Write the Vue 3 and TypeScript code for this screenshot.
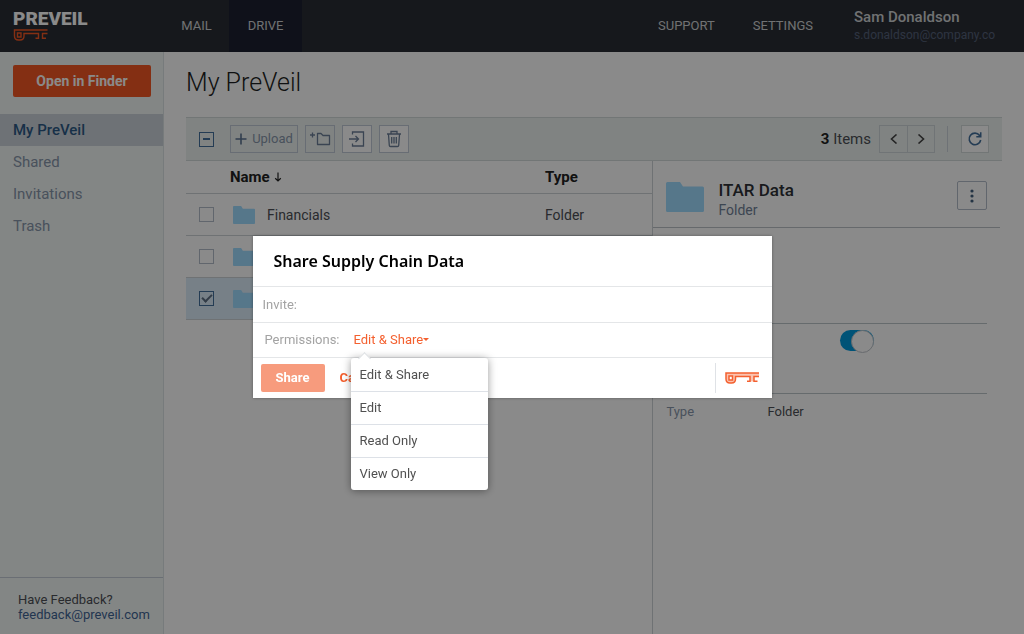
<script setup lang="ts">
import { ref } from 'vue'

interface Row {
  id: number
  name: string
  type: string
  checked: boolean
}

const places: string[] = ['My PreVeil', 'Shared', 'Invitations', 'Trash']
const activePlace = ref('My PreVeil')

const rows = ref<Row[]>([
  { id: 1, name: 'Financials', type: 'Folder', checked: false },
  { id: 2, name: '', type: '', checked: false },
  { id: 3, name: '', type: '', checked: true },
])

const permissions: string[] = ['Edit & Share', 'Edit', 'Read Only', 'View Only']
const permission = ref('Edit & Share')
const menuOpen = ref(true)
const invite = ref('')
const synced = ref(true)

function choose(value: string): void {
  permission.value = value
  menuOpen.value = false
}
</script>

<template>
  <div class="app">
    <header class="topbar">
      <div class="brand">
        <span class="wordmark">PREVEIL</span>
        <svg class="brand-key" viewBox="0 0 34 12" aria-hidden="true">
          <path d="M34 1H1V7Q1 11 5 11H6.500Q10.500 11 10.500 7V4.500H25V9.300H22M34 4.500H29V9.300H32.500M4 4H7.500V8H4Z" fill="none" stroke="currentColor" stroke-width="1.400" />
        </svg>
      </div>
      <nav class="tabs">
        <a href="#" class="tab mail">MAIL</a>
        <a href="#" class="tab active">DRIVE</a>
      </nav>
      <nav class="links">
        <a href="#">SUPPORT</a>
        <a href="#">SETTINGS</a>
      </nav>
      <div class="account">
        <strong>Sam Donaldson</strong>
        <span>s.donaldson@company.co</span>
      </div>
    </header>

    <div class="body">
      <aside class="sidebar">
        <button type="button" class="finder">Open in Finder</button>
        <nav class="places">
          <a v-for="p in places" :key="p" href="#" :class="{ active: p === activePlace }" @click.prevent="activePlace = p">{{ p }}</a>
        </nav>
        <div class="feedback">
          <span>Have Feedback?</span>
          <a href="mailto:feedback@preveil.com">feedback@preveil.com</a>
        </div>
      </aside>

      <main class="main">
        <h1>My PreVeil</h1>
        <div class="toolbar">
          <input type="checkbox" class="check partial" aria-label="Select all" />
          <div class="actions">
            <button type="button" class="tool upload">
              <svg width="12" height="12" viewBox="0 0 12 12" aria-hidden="true"><path d="M6 0.500V11.500M0.500 6H11.500" stroke="currentColor" stroke-width="1.600" /></svg>
              Upload
            </button>
            <button type="button" class="tool" aria-label="New folder">
              <svg width="22" height="16" viewBox="0 0 22 16" fill="none" stroke="currentColor" aria-hidden="true">
                <path d="M3.500 1.500V6.500M1 4H6" stroke-width="1.300" />
                <path d="M8.500 2.500H12L14 4.500H20.500V13.500H8.500Z" stroke-width="1.300" stroke-linejoin="round" />
              </svg>
            </button>
            <button type="button" class="tool light" aria-label="Move to">
              <svg width="18" height="18" viewBox="0 0 18 18" fill="none" stroke="currentColor" stroke-width="1.300" aria-hidden="true">
                <path d="M4.500 4.500V2H15.500V16H4.500V13.500M1 9H10.500M7.500 6L10.500 9L7.500 12" />
              </svg>
            </button>
            <button type="button" class="tool light" aria-label="Delete">
              <svg width="16" height="18" viewBox="0 0 16 18" fill="none" stroke="currentColor" stroke-width="1.300" aria-hidden="true">
                <path d="M1 4H15M5 4V1.500H11V4M2.500 4.500L3.300 15.500Q3.400 16.500 4.500 16.500H11.500Q12.600 16.500 12.700 15.500L13.500 4.500M5.700 7V13.500M8 7V13.500M10.300 7V13.500" />
              </svg>
            </button>
          </div>
          <p class="count"><b>3</b> Items</p>
          <div class="pager">
            <button type="button" aria-label="Previous page">
              <svg width="8" height="10" viewBox="0 0 8 10" aria-hidden="true"><path d="M6.500 0.500L1.500 5L6.500 9.500" /></svg>
            </button>
            <button type="button" aria-label="Next page">
              <svg width="8" height="10" viewBox="0 0 8 10" aria-hidden="true"><path d="M1.500 0.500L6.500 5L1.500 9.500" /></svg>
            </button>
          </div>
          <button type="button" class="refresh" aria-label="Refresh">
            <svg width="16" height="16" viewBox="0 0 16 16" fill="none" stroke="currentColor" stroke-width="1.600" aria-hidden="true">
              <path d="M13.700 9A5.800 5.800 0 1 1 12.600 4.400L13.700 5.500M13.700 1.200V5.800H9.300" />
            </svg>
          </button>
        </div>

        <div class="panes">
          <div class="list">
            <table>
              <thead>
                <tr>
                  <th class="pick"></th>
                  <th class="name">Name
                    <svg width="8" height="10" viewBox="0 0 8 10" fill="none" stroke="currentColor" stroke-width="1.200" aria-hidden="true"><path d="M4 0.500V9M1.200 6.300L4 9L6.800 6.300" /></svg>
                  </th>
                  <th>Type</th>
                </tr>
              </thead>
              <tbody>
                <tr v-for="row in rows" :key="row.id" :class="{ selected: row.checked }">
                  <td class="pick"><input v-model="row.checked" type="checkbox" class="check" aria-label="Select row" /></td>
                  <td>
                    <span class="entry">
                      <svg width="22" height="18" viewBox="0 0 38 30" preserveAspectRatio="none" aria-hidden="true"><path d="M1.500 0H14L17 4.500H36.500Q38 4.500 38 6V28.500Q38 30 36.500 30H1.500Q0 30 0 28.500V1.500Q0 0 1.500 0Z" fill="currentColor" /></svg>
                      {{ row.name }}
                    </span>
                  </td>
                  <td>{{ row.type }}</td>
                </tr>
              </tbody>
            </table>
          </div>

          <section class="detail">
            <div class="detail-head">
              <svg class="folder" width="38" height="30" viewBox="0 0 38 30" aria-hidden="true"><path d="M1.500 0H14L17 4.500H36.500Q38 4.500 38 6V28.500Q38 30 36.500 30H1.500Q0 30 0 28.500V1.500Q0 0 1.500 0Z" fill="currentColor" /></svg>
              <div class="detail-title">
                <h2>ITAR Data</h2>
                <span>Folder</span>
              </div>
              <button type="button" class="more" aria-label="More actions">
                <svg width="4" height="14" viewBox="0 0 4 14" fill="currentColor" aria-hidden="true"><circle cx="2" cy="2" r="1.600" /><circle cx="2" cy="7" r="1.600" /><circle cx="2" cy="12" r="1.600" /></svg>
              </button>
            </div>
            <div class="detail-body">
              <div class="block spacer"></div>
              <div class="block sync">
                <input v-model="synced" type="checkbox" role="switch" class="switch" aria-label="Sync" />
              </div>
              <dl class="facts">
                <dt>Type</dt>
                <dd>Folder</dd>
              </dl>
            </div>
          </section>
        </div>
      </main>
    </div>

    <div class="overlay">
      <form class="dialog" role="dialog" aria-labelledby="share-title" @submit.prevent>
        <h2 id="share-title">Share Supply Chain Data</h2>
        <div class="line invite">
          <label for="invite">Invite:</label>
          <input id="invite" v-model="invite" type="text" />
        </div>
        <div class="line perms">
          <span id="perm-label" class="perm-label">Permissions:</span>
          <div class="picker">
            <button type="button" class="current" aria-haspopup="menu" aria-describedby="perm-label" @click="menuOpen = !menuOpen">{{ permission }}<i class="caret"></i></button>
            <div v-if="menuOpen" class="menu" role="menu">
              <button v-for="p in permissions" :key="p" type="button" role="menuitem" @click="choose(p)">{{ p }}</button>
            </div>
          </div>
        </div>
        <div class="foot">
          <button type="submit" class="share">Share</button>
          <button type="button" class="cancel">Cancel</button>
          <div class="seal">
            <svg width="34" height="12" viewBox="0 0 34 12" aria-hidden="true">
              <path d="M1 1H34V4.500H10.500V7Q10.500 11 6.500 11H5Q1 11 1 7Z" fill="#fbc3b0" />
              <path d="M25 4H29V9.500H25Z" fill="#fbc3b0" />
              <path d="M34 1H1V7Q1 11 5 11H6.500Q10.500 11 10.500 7V4.500H25V9.300H22M34 4.500H29V9.300H32.500" fill="none" stroke="currentColor" stroke-width="1.500" />
              <path d="M4 4H7.500V8H4Z" fill="#fff" stroke="currentColor" stroke-width="1.500" />
            </svg>
          </div>
        </div>
      </form>
    </div>
  </div>
</template>

<style>
html,
body,
#app {
  height: 100%;
}
</style>

<style scoped>
* {
  box-sizing: border-box;
}
.app {
  min-height: 100%;
  display: flex;
  flex-direction: column;
  background: #fff;
  color: #4c4f55;
  font: 14px/20px Roboto, "Liberation Sans", sans-serif;
}
button {
  font: inherit;
  color: inherit;
  margin: 0;
  padding: 0;
  border: 0;
  background: none;
  cursor: pointer;
}
a {
  color: inherit;
  text-decoration: none;
}
h1,
h2,
p,
dl,
dd {
  margin: 0;
}
.topbar {
  display: flex;
  height: 52px;
  background: #2a2e35;
  color: #d0d2d4;
}
.brand {
  width: 164px;
  padding: 9px 0 0 13px;
  display: flex;
  flex-direction: column;
}
.wordmark {
  font-size: 19px;
  line-height: 20px;
  font-weight: 900;
  color: #fff;
}
.brand-key {
  width: 35px;
  height: 12px;
  color: #f45723;
}
.tabs,
.links {
  display: flex;
  font-size: 13px;
}
.tab {
  width: 73px;
  display: flex;
  align-items: center;
  justify-content: center;
}
.tab.mail {
  width: 65px;
}
.tab.active {
  background: #1c2030;
}
.links {
  margin-left: auto;
  align-items: center;
  gap: 38px;
}
.account {
  width: 170px;
  margin-left: 41px;
  padding-top: 8px;
  display: flex;
  flex-direction: column;
  line-height: 18px;
}
.account strong {
  font-size: 15px;
  font-weight: 500;
}
.account span {
  font-size: 12px;
  color: #55617a;
}
.body {
  flex: 1;
  display: flex;
}
.sidebar {
  width: 164px;
  display: flex;
  flex-direction: column;
  background: #f3f8f6;
  border-right: 1px solid #dde3e6;
}
.finder {
  height: 32px;
  margin: 13px 12px 17px 13px;
  border-radius: 2px;
  background: #f45723;
  color: #fff;
  font-weight: 700;
}
.places {
  display: flex;
  flex-direction: column;
}
.places a {
  padding: 0 13px;
  font-size: 15px;
  line-height: 32px;
  color: #8796aa;
}
.places a.active {
  background: #ccd3da;
  color: #2c5a86;
  font-weight: 500;
}
.feedback {
  margin-top: auto;
  padding: 14px 18px 12px;
  border-top: 1px solid #c4ccd6;
  display: flex;
  flex-direction: column;
  font-size: 13px;
  line-height: 15px;
}
.feedback a {
  color: #3f6494;
}
.main {
  flex: 1;
  display: flex;
  flex-direction: column;
  padding: 0 22px;
}
h1 {
  padding: 15px 0 18px;
  font-size: 25px;
  line-height: 32px;
  font-weight: 300;
  color: #1c1e22;
}
.toolbar {
  height: 44px;
  display: flex;
  align-items: center;
  padding: 0 13px;
  background: #edf3f1;
  border-top: 1px solid #d3dadb;
  border-bottom: 1px solid #d3dadb;
}
.check {
  appearance: none;
  display: grid;
  place-items: center;
  width: 15px;
  height: 15px;
  margin: 0;
  border: 1px solid #b4bcc9;
}
.check:checked,
.check.partial {
  border-color: #44709c;
}
.check.partial::after {
  content: "";
  width: 7px;
  height: 2px;
  background: #44709c;
}
.check:checked::after {
  content: "";
  width: 8px;
  height: 4px;
  margin-bottom: 3px;
  border: solid #5e7084;
  border-width: 0 0 2px 2px;
  transform: rotate(-45deg);
}
.actions {
  display: flex;
  gap: 7px;
  margin-left: 16px;
}
.tool {
  width: 30px;
  height: 28px;
  display: flex;
  align-items: center;
  justify-content: center;
  border: 1px solid #c1c9d6;
  color: #6c7f98;
}
.tool.upload {
  width: 68px;
  gap: 5px;
  font-size: 13px;
  color: #8796aa;
}
.tool.upload svg {
  color: #5a7290;
}
.tool.light {
  background: #fff;
}
.count {
  margin: 0 8px 0 auto;
  font-size: 15px;
}
.count b {
  color: #222;
}
.pager {
  display: flex;
  height: 28px;
  margin-right: 13px;
  border: 1px solid #cfd6da;
}
.pager button {
  width: 27px;
}
.pager button + button {
  border-left: 1px solid #cfd6da;
}
.pager path {
  fill: none;
  stroke: #444;
  stroke-width: 1.6;
}
.refresh {
  position: relative;
  display: grid;
  place-items: center;
  width: 28px;
  height: 28px;
  margin-left: 13px;
  border: 1px solid #d3dadb;
  background: #fff;
  color: #44709c;
}
.refresh::before {
  content: "";
  position: absolute;
  left: -15px;
  top: 0;
  width: 1px;
  height: 26px;
  background: #ccd3da;
}
.panes {
  flex: 1;
  display: flex;
}
.list {
  flex: 467 1 0;
}
table {
  width: 100%;
  border-collapse: separate;
  border-spacing: 0;
  table-layout: fixed;
  font-size: 14px;
}
th,
td {
  padding: 0;
  text-align: left;
  border-bottom: 1px solid #cdd2d6;
}
th {
  height: 33px;
  font-size: 15px;
  font-weight: 700;
  color: #222;
}
th.pick {
  width: 44px;
}
th.name {
  width: 315px;
}
th svg {
  margin-left: 1px;
}
td {
  height: 42px;
}
td.pick {
  padding-left: 13px;
}
.selected td {
  background: #dcedfa;
}
.entry {
  display: flex;
  align-items: center;
  gap: 12px;
  padding-left: 3px;
}
.entry svg,
.folder {
  color: #9fdcff;
}
.detail {
  flex: 349 1 0;
  border-left: 1px solid #cdd2d6;
}
.detail-head {
  display: flex;
  height: 67px;
  margin-right: 2px;
  padding: 20px 13px 0;
  border-bottom: 1px solid #bcc2c8;
}
.folder {
  margin-top: 1px;
}
.detail-title {
  margin-left: 14px;
}
.detail-title h2 {
  font-size: 17px;
  line-height: 19px;
  font-weight: 500;
  color: #2e3136;
}
.detail-title span {
  color: #718198;
}
.more {
  display: grid;
  place-items: center;
  width: 30px;
  height: 29px;
  margin-left: auto;
  border: 1px solid #b4bcc9;
  border-radius: 2px;
  color: #44607e;
}
.detail-body {
  padding: 0 15px 0 13px;
}
.block {
  border-bottom: 1px solid #bcc6ca;
}
.spacer {
  height: 96px;
}
.sync {
  height: 70px;
  padding: 6px 113px 0 0;
  display: flex;
  justify-content: flex-end;
  align-items: flex-start;
}
.switch {
  appearance: none;
  width: 34px;
  height: 21px;
  margin: 0;
  border-radius: 11px;
  background: #0099dd;
  display: flex;
  justify-content: flex-end;
}
.switch::after {
  content: "";
  width: 21px;
  height: 21px;
  border: 1px solid #bfc5cb;
  border-radius: 50%;
  background: #fff;
}
.facts {
  display: grid;
  grid-template-columns: 101px 1fr;
  padding-top: 8px;
  font-size: 13px;
}
.facts dt {
  color: #8796aa;
}
.overlay {
  position: fixed;
  inset: 0;
  display: grid;
  place-items: center;
  background: rgba(0, 0, 0, 0.46);
}
.dialog {
  width: min(519px, 92vw);
  background: #fff;
  font-size: 13px;
  box-shadow: 0 0 3px rgba(0, 0, 0, 0.35);
}
.dialog h2 {
  padding: 1px 21px 0;
  font: 600 16px/49px "Noto Sans", "Open Sans", sans-serif;
  color: #000;
}
.line {
  display: flex;
  align-items: center;
  border-top: 1px solid #e4e6e8;
  color: #a3a3a3;
}
.invite {
  height: 36px;
  padding: 0 10px;
}
.invite input {
  flex: 1;
  min-width: 0;
  height: 24px;
  border: 0;
  outline: 0;
  background: none;
  font: inherit;
}
.perms {
  height: 35px;
  padding: 0 12px;
}
.perm-label {
  width: 76px;
}
.picker {
  position: relative;
  margin-left: 13px;
}
.current {
  color: #f4602f;
}
.caret {
  display: inline-block;
  vertical-align: 3px;
  border: 3px solid transparent;
  border-top-color: currentColor;
  border-bottom: 0;
}
.menu {
  position: absolute;
  top: 28px;
  left: -3px;
  width: 137px;
  display: flex;
  flex-direction: column;
  background: #fff;
  border-radius: 3px;
  box-shadow: 0 1px 8px rgba(0, 0, 0, 0.4);
}
.menu::before {
  content: "";
  position: absolute;
  top: -4px;
  left: 9px;
  width: 8px;
  height: 8px;
  background: #fff;
  border: solid #dcdfe2;
  border-width: 1px 0 0 1px;
  transform: rotate(45deg);
}
.menu button {
  height: 33px;
  padding: 0 9px;
  text-align: left;
  color: #505050;
}
.menu button + button {
  border-top: 1px solid #dde1e7;
}
.foot {
  display: flex;
  align-items: center;
  height: 41px;
  padding: 0 13px 0 8px;
  border-top: 1px solid #e4e6e8;
}
.share {
  width: 64px;
  height: 28px;
  border-radius: 2px;
  background: #f79b7d;
  color: #fff;
  font-weight: 700;
}
.cancel {
  margin-left: 15px;
  color: #f4602f;
  font-weight: 700;
}
.seal {
  display: flex;
  align-items: center;
  height: 30px;
  margin-left: auto;
  padding-left: 9px;
  border-left: 1px solid #dfe2e6;
  color: #f4602f;
}
</style>
